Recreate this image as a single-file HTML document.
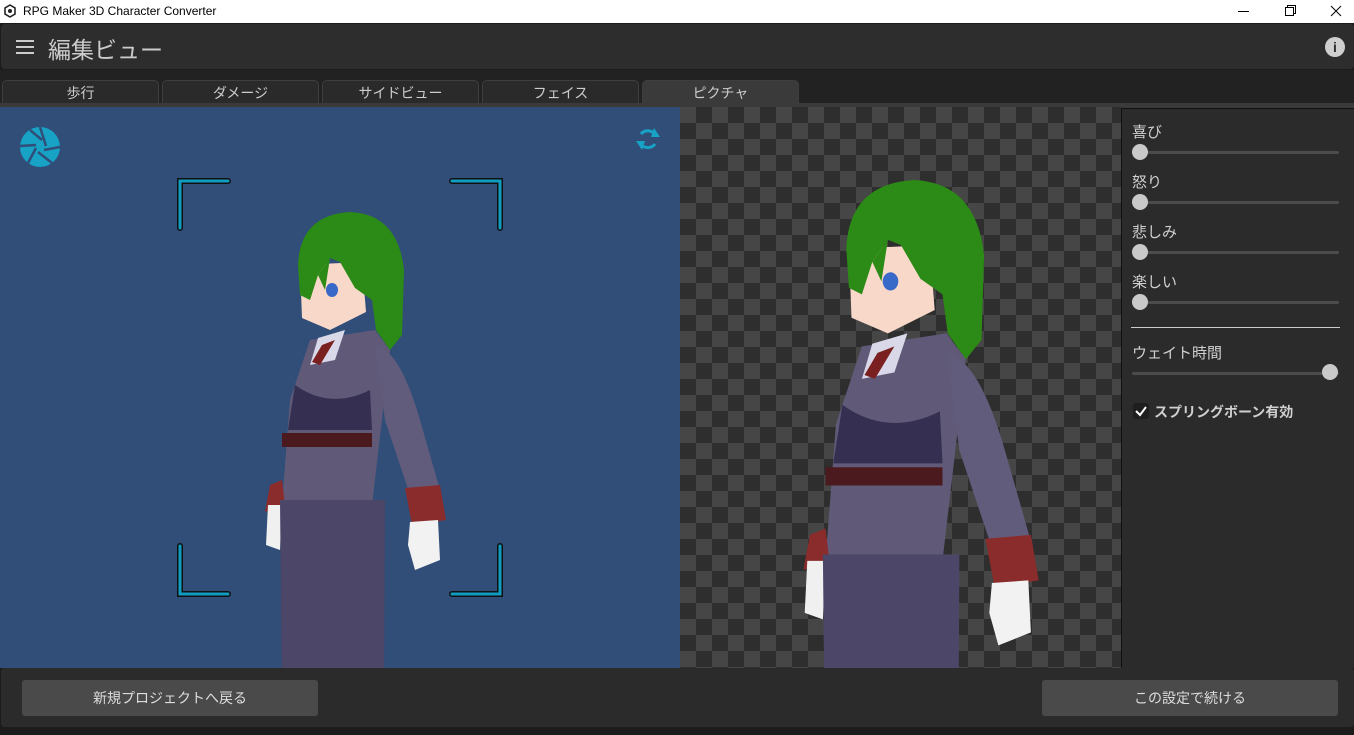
<!DOCTYPE html>
<html><head><meta charset="utf-8"><style>
*{margin:0;padding:0;box-sizing:border-box}
body{width:1354px;height:735px;overflow:hidden;background:#1c1c1c;font-family:"Liberation Sans","Noto Sans CJK JP",sans-serif;position:relative}
.abs{position:absolute}
.title{left:0;top:0;width:1354px;height:23px;background:#fff;font-size:12px;color:#000}
.hdr{left:1px;top:24px;width:1353px;height:45px;background:#2d2d2d;border-radius:4px}
.tab{top:80px;height:24px;background:#2a2a2a;border:1px solid #3e3e3e;border-bottom:none;border-radius:5px 5px 0 0;color:#ccc;font-size:14px;text-align:center;line-height:25px}
.panel{left:1121px;top:108px;width:233px;height:560px;background:#2b2b2b;border-left:1px solid #111;border-top:1px solid #111}
.lbl{color:#d0d0d0;font-size:15px;left:10px}
.track{left:10px;width:207px;height:3px;background:#4c4c4c;border-radius:2px}
.knob{width:16px;height:16px;border-radius:50%;background:#c9c9c9}
.btn{top:680px;height:36px;background:#4a4a4a;border-radius:3px;color:#ddd;font-size:14px;text-align:center;line-height:37px}
</style></head><body>
<div class="abs title">
 <svg class="abs" style="left:3px;top:4px" width="14" height="14" viewBox="0 0 14 14"><path d="M7 1L12 4V10L7 13L2 10V4Z" fill="none" stroke="#222" stroke-width="1.6"/><circle cx="7" cy="7" r="2" fill="#222"/></svg>
 <span class="abs" style="left:23px;top:4px">RPG Maker 3D Character Converter</span>
 <div class="abs" style="left:1238px;top:11px;width:11px;height:1px;background:#000"></div>
 <div class="abs" style="left:1287px;top:5px;width:9px;height:9px;border:1px solid #000"></div>
 <div class="abs" style="left:1285px;top:7px;width:9px;height:9px;border:1px solid #000;background:#fff"></div>
 <svg class="abs" style="left:1330px;top:5px" width="12" height="12"><path d="M1 1L11 11M11 1L1 11" stroke="#000" stroke-width="1"/></svg>
</div>
<div class="abs hdr">
 <div class="abs" style="left:15px;top:16px;width:18px;height:2px;background:#ccc;box-shadow:0 6px #ccc,0 12px #ccc"></div>
 <div class="abs" style="left:47px;top:7px;color:#ccc;font-size:23px">編集ビュー</div>
 <div class="abs" style="left:1324px;top:13px;width:20px;height:20px;border-radius:50%;background:#cfcfcf;color:#2d2d2d;font-weight:bold;font-size:14px;text-align:center;line-height:20px">i</div>
</div>
<div class="abs" style="left:0;top:70px;width:1354px;height:37px;background:#222"></div>
<div class="abs tab" style="left:2px;width:157px">歩行</div>
<div class="abs tab" style="left:162px;width:157px">ダメージ</div>
<div class="abs tab" style="left:322px;width:157px">サイドビュー</div>
<div class="abs tab" style="left:482px;width:157px">フェイス</div>
<div class="abs tab" style="left:642px;width:157px;background:#3a3a3a">ピクチャ</div>
<div class="abs" style="left:0;top:103px;width:1354px;height:5px;background:#3a3a3a"></div>
<div class="abs" style="left:0;top:107px;width:680px;height:561px;background:#304e78"></div>
<div class="abs" style="left:680px;top:107px;width:441px;height:561px;background-color:#2e2e2e;background-image:linear-gradient(45deg,#464646 25%,transparent 25%,transparent 75%,#464646 75%),linear-gradient(45deg,#464646 25%,transparent 25%,transparent 75%,#464646 75%);background-size:32px 32px;background-position:16px 0,0 16px"></div>
<svg class="abs" style="left:0;top:0" width="1354" height="735">
<defs>
<clipPath id="vp"><rect x="0" y="107" width="1121" height="561"/></clipPath>
<g id="ch">
 <path d="M310 340L375 330L390 350L372 505L282 505L290 400Z" fill="#605a78"/>
 <path d="M295 385Q330 410 370 390L372 430L288 430Z" fill="#2a2648" opacity=".8"/>
 <path d="M375 345Q400 350 420 420L440 490L410 495L385 420Z" fill="#625c7c"/>
 <path d="M405 488L440 485L446 520L412 525Z" fill="#8a2c2c"/>
 <path d="M410 522L438 520L440 560L415 570L408 545Z" fill="#f2f2f2"/>
 <path d="M270 485L282 480L285 505L265 512Z" fill="#8a2c2c"/>
 <path d="M268 505L282 505L280 550L266 545Z" fill="#f0f0f0"/>
 <path d="M282 433L372 433L372 447L282 447Z" fill="#4a1a1e"/>
 <path d="M280 500L385 500L384 700L282 700Z" fill="#4c4668"/>
 <path d="M318 338L345 330L335 360L310 365Z" fill="#d8d8e8"/>
 <path d="M322 345L335 340L320 365L312 362Z" fill="#7a2020"/>
 <path d="M300 265L362 262L366 312L330 330L302 318Z" fill="#f8d8c8"/>
 <path d="M298 265Q300 215 350 212Q398 214 404 270L402 335L390 350L376 330L372 300L355 288L340 262L330 258L318 275L310 300L300 295Z" fill="#2c8a16"/>
 <path d="M318 275L330 258L325 290Z" fill="#2c8a16"/>
 <ellipse cx="332" cy="290" rx="6" ry="7" fill="#3868c8"/>
</g>
</defs>
<g clip-path="url(#vp)">
<use href="#ch"/>
<use href="#ch" transform="translate(845 180) scale(1.3) translate(-297 -212)"/>
</g>
<g fill="none" stroke="#111" stroke-width="6" stroke-linecap="round"><path d="M180 228V181H228M452 181H500V228M180 546V594H228M452 594H500V546"/></g>
<g fill="none" stroke="#0e9cc0" stroke-width="3" stroke-linecap="round"><path d="M180 228V181H228M452 181H500V228M180 546V594H228M452 594H500V546"/></g>
<circle cx="40" cy="147" r="20" fill="#17a2c6"/>
<g stroke="#304e78" stroke-width="2.5"><path d="M40 127L46 146M60 147L44 150M52 163L38 152M28 163L36 148M20 146L36 145M30 130L42 140"/></g>
<g fill="none" stroke="#17a2c6" stroke-width="3"><path d="M641 134A9 9 0 0 1 656 136M655 144A9 9 0 0 1 640 143"/></g>
<path d="M654 128L660 137L651 137Z M642 150L636 141L645 141Z" fill="#17a2c6"/>
</svg>
<div class="abs panel">
 <div class="abs lbl" style="top:12px">喜び</div>
 <div class="abs track" style="top:42px"></div><div class="abs knob" style="left:10px;top:35px"></div>
 <div class="abs lbl" style="top:62px">怒り</div>
 <div class="abs track" style="top:92px"></div><div class="abs knob" style="left:10px;top:85px"></div>
 <div class="abs lbl" style="top:112px">悲しみ</div>
 <div class="abs track" style="top:142px"></div><div class="abs knob" style="left:10px;top:135px"></div>
 <div class="abs lbl" style="top:162px">楽しい</div>
 <div class="abs track" style="top:192px"></div><div class="abs knob" style="left:10px;top:185px"></div>
 <div class="abs" style="left:9px;top:218px;width:209px;height:1px;background:#ccc"></div>
 <div class="abs lbl" style="top:233px">ウェイト時間</div>
 <div class="abs track" style="top:263px"></div><div class="abs knob" style="left:200px;top:255px"></div>
 <div class="abs" style="left:11px;top:294px;width:16px;height:16px;border-radius:3px;background:#1e1e1e"></div>
 <svg class="abs" style="left:12px;top:295px" width="14" height="14"><path d="M2 7L6 11L12 3" fill="none" stroke="#fff" stroke-width="2"/></svg>
 <div class="abs" style="left:32px;top:293px;color:#d0d0d0;font-size:14px;font-weight:bold">スプリングボーン有効</div>
</div>
<div class="abs" style="left:1px;top:668px;width:1353px;height:59px;background:#2b2b2b;border-radius:3px"></div>
<div class="abs btn" style="left:22px;width:296px">新規プロジェクトへ戻る</div>
<div class="abs btn" style="left:1042px;width:296px">この設定で続ける</div>
</body></html>
